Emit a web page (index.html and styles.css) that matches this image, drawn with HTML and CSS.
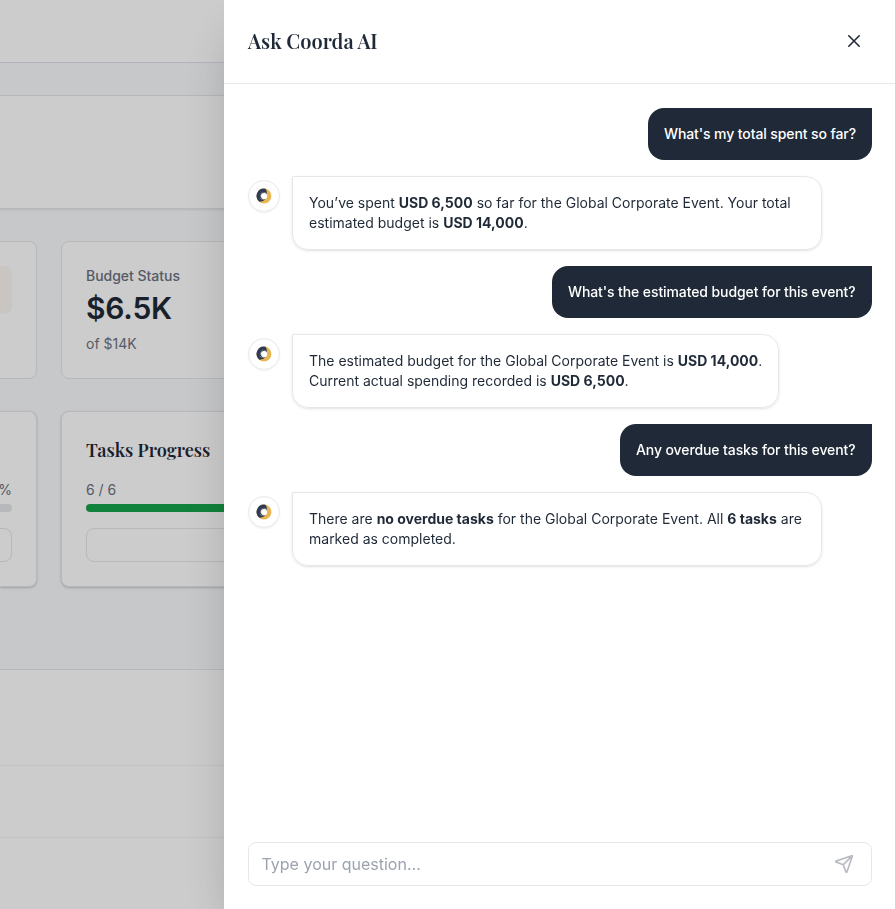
FILE: index.html
```html
<!DOCTYPE html>
<html lang="en">
<head>
<meta charset="utf-8">
<title>Ask Coorda AI</title>
<link rel="stylesheet" href="styles.css">
</head>
<body>
<svg class="defs" aria-hidden="true">
  <symbol id="logo" viewBox="0 0 16 16">
    <circle cx="8" cy="8" r="5.3" fill="none" stroke="#e8b650" stroke-width="4.2"/>
    <path d="M9.5 .75A7.4 7.4 0 0 0 3.2 13.65Q7.4 13.8 9.4 10.9A3.2 3.2 0 1 1 10.8 6.4Q11.2 3 9.5 .75Z" fill="#2f3b55"/>
    <path d="M4.8 9Q4.2 5.8 6.6 3.8M8.6 11.3Q5.6 12.2 3.6 10M7.4 4.8Q10 3.8 11.4 6.2" fill="none" stroke="#a5a6a7" stroke-width=".6"/>
  </symbol>
</svg>
<main class="page">
  <header class="topbar"></header>
  <section class="banner"></section>
  <section class="grid">
    <article class="card card-cut stat"><div class="tile"></div></article>
    <article class="card stat">
      <p class="label">Budget Status</p>
      <p class="value">$6.5K</p>
      <p class="note">of $14K</p>
    </article>
    <article class="card card-cut raised">
      <div class="title"></div>
      <p class="count count-end">%</p>
      <div class="bar"></div>
      <div class="button"></div>
    </article>
    <article class="card raised">
      <h3 class="title">Tasks Progress</h3>
      <p class="count">6 / 6</p>
      <div class="bar bar-full"></div>
      <div class="button"></div>
    </article>
  </section>
  <section class="list">
    <div class="row row-head"></div>
    <div class="row"></div>
  </section>
</main>
<div class="overlay"></div>
<aside class="drawer">
  <header class="drawer-head">
    <h2>Ask Coorda AI</h2>
    <svg class="close" viewBox="0 0 20 20"><path d="M4.8 4.8 15.2 15.2M15.2 4.8 4.8 15.2"/></svg>
  </header>
  <div class="chat">
    <p class="ask ask-1">What's my total spent so far?</p>
    <div class="reply"><span class="avatar"><svg><use href="#logo"/></svg></span>
      <p class="answer">You’ve spent <b>USD 6,500</b> so far for the Global Corporate Event. Your total estimated budget is <b>USD 14,000</b>.</p></div>
    <p class="ask ask-2">What's the estimated budget for this event?</p>
    <div class="reply"><span class="avatar"><svg><use href="#logo"/></svg></span>
      <p class="answer">The estimated budget for the Global Corporate Event is <b>USD 14,000</b>.<br>Current actual spending recorded is <b>USD 6,500</b>.</p></div>
    <p class="ask ask-3">Any overdue tasks for this event?</p>
    <div class="reply"><span class="avatar"><svg><use href="#logo"/></svg></span>
      <p class="answer">There are <b>no overdue tasks</b> for the Global Corporate Event. All <b>6 tasks</b> are marked as completed.</p></div>
  </div>
  <div class="composer">
    <span>Type your question…</span>
    <svg class="send" viewBox="0 0 24 24"><path d="M14.54 21.69a.5.5 0 0 0 .94-.03l6.5-19a.5.5 0 0 0-.64-.64l-19 6.5a.5.5 0 0 0-.02.94l7.93 3.18a2 2 0 0 1 1.11 1.11zM21.85 2.15l-10.94 10.94"/></svg>
  </div>
</aside>
</body>
</html>
```
FILE: styles.css
```css
* { box-sizing: border-box; }
body { margin: 0; font: 14px/20px Inter, sans-serif; color: #1f2937; background: #f9fafc; }
p, h2, h3 { margin: 0; }
.defs { position: absolute; width: 0; height: 0; }
.page { display: flex; flex-direction: column; height: 100vh; overflow: hidden; }
.topbar { flex: none; height: 63px; background: #fff; border-bottom: 1px solid #e0e1e8; }
.banner { flex: none; height: 114px; margin-top: 32px; background: #fff; border: solid #e5e7eb; border-width: 1px 0; box-shadow: 0 1px 2px rgba(0,0,0,.1); }
.grid { display: grid; grid-template-columns: 37px 1fr; grid-template-rows: 138px 176px; gap: 32px 24px; margin-top: 32px; }
.card { padding: 24px; background: #fff; border: 1px solid #e5e7eb; border-radius: 8px; }
.card-cut { padding-left: 0; border-left: 0; border-radius: 0 8px 8px 0; }
.raised { box-shadow: 0 1px 3px rgba(0,0,0,.1), 0 1px 2px rgba(0,0,0,.1); }
.tile { height: 48px; background: #fcf7f1; border-radius: 0 8px 8px 0; }
.label { color: #6b7280; font-weight: 500; letter-spacing: -.02px; }
.value { margin-top: 4px; font-size: 30px; line-height: 36px; font-weight: 600; letter-spacing: -.2px; }
.note { margin-top: 8px; color: #6b7280; }
.title { height: 28px; font: 600 18px/28px "Playfair Display", "Liberation Serif", serif; }
.count { margin-top: 16px; color: #6b7280; }
.count-end { direction: rtl; }
.bar { height: 8px; margin-top: 4px; background: #e5e7eb; border-radius: 0 4px 4px 0; }
.bar-full { background: #16a34a; border-radius: 4px; }
.button { height: 34px; margin-top: 16px; border: 1px solid #e5e7eb; border-radius: 8px; }
.card-cut .button { border-left: 0; border-radius: 0 8px 8px 0; }
.list { flex: 1; margin-top: 82px; background: #fff; border-top: 1px solid #e5e7eb; }
.row { height: 72px; border-bottom: 1px solid #f3f4f6; }
.row-head { height: 96px; }
.overlay { position: fixed; inset: 0; background: rgba(0,0,0,.2); }
.drawer { position: fixed; inset: 0 0 0 224px; display: flex; flex-direction: column; background: #fff; box-shadow: 0 25px 50px -12px rgba(0,0,0,.25); }
.drawer-head { display: flex; align-items: center; justify-content: space-between; height: 84px; padding: 0 31px 2px 24px; border-bottom: 1px solid #e5e7eb; }
.drawer-head h2 { font: 600 20px/28px "Playfair Display", "Liberation Serif", serif; }
.close { width: 20px; height: 20px; fill: none; stroke: #1f2937; stroke-width: 1.6; stroke-linecap: round; }
.chat { flex: 1; display: flex; flex-direction: column; gap: 16px; padding: 24px 23px 24px 24px; }
.ask { align-self: flex-end; padding: 16px 0 16px 16px; white-space: nowrap; color: #fff; font-weight: 500; letter-spacing: -.1px; background: #1f2937; border-radius: 16px 0 16px 16px; }
.ask-1 { width: 224px; }
.ask-2 { width: 320px; }
.ask-3 { width: 252px; }
.reply { display: flex; align-items: flex-start; gap: 12px; }
.avatar { flex: none; display: flex; align-items: center; justify-content: center; width: 32px; height: 32px; margin-top: 4px; border: 1px solid #e5e7eb; border-radius: 50%; box-shadow: 0 1px 2px rgba(0,0,0,.06); }
.avatar svg { width: 16px; height: 16px; }
.answer { max-width: 530px; padding: 16px; border: 1px solid #e5e7eb; border-radius: 0 16px 16px 16px; box-shadow: 0 1px 3px rgba(0,0,0,.1), 0 1px 2px -1px rgba(0,0,0,.1); }
.answer b { font-weight: 650; }
.composer { display: flex; align-items: center; justify-content: space-between; height: 44px; margin: 0 23px 23px 24px; padding: 0 17px 0 12.5px; color: #9ca3af; font-size: 16px; line-height: 24px; border: 1px solid #e5e7eb; border-radius: 8px; }
.send { width: 20px; height: 20px; fill: none; stroke: #b9bcc2; stroke-width: 2; stroke-linecap: round; stroke-linejoin: round; }
```
